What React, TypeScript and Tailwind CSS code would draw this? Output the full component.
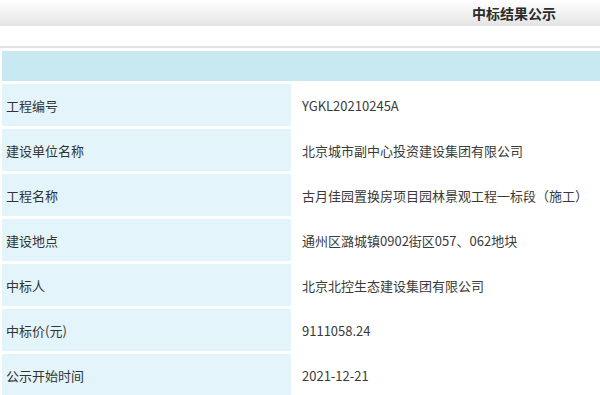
const rows: [string, string][] = [
  ["工程编号", "YGKL20210245A"],
  ["建设单位名称", "北京城市副中心投资建设集团有限公司"],
  ["工程名称", "古月佳园置换房项目园林景观工程一标段（施工）"],
  ["建设地点", "通州区潞城镇0902街区057、062地块"],
  ["中标人", "北京北控生态建设集团有限公司"],
  ["中标价(元)", "9111058.24"],
  ["公示开始时间", "2021-12-21"],
];

export default function App() {
  return (
    <div
      className="w-[600px] h-[395px] overflow-hidden bg-white text-[#333]"
      style={{ fontFamily: '"Microsoft YaHei", "Noto Sans CJK SC", "Noto Sans", sans-serif' }}
    >
      <div className="h-[26px] bg-gradient-to-b from-white to-[#e4e4e4] flex justify-end pr-[44px]">
        <span className="text-[14px] font-bold leading-[26px] text-[#2b2b2b]">中标结果公示</span>
      </div>
      <div className="h-[20px]" />
      <div className="h-[2px] bg-[#e2e2e2]" />
      <div className="pl-[2px] pt-[3px] flex flex-col gap-[3px]">
        <div className="h-[30px] bg-[#c8e8f2]" />
        {rows.map(([label, value]) => (
          <div key={label} className="h-[42px] flex text-[13px] leading-none">
            <div className="w-[289px] bg-[#e3f4fb] flex items-center pl-[4px]">{label}</div>
            <div className="flex-1 flex items-center pl-[11px] text-[#3a3a3a]">{value}</div>
          </div>
        ))}
      </div>
    </div>
  );
}
